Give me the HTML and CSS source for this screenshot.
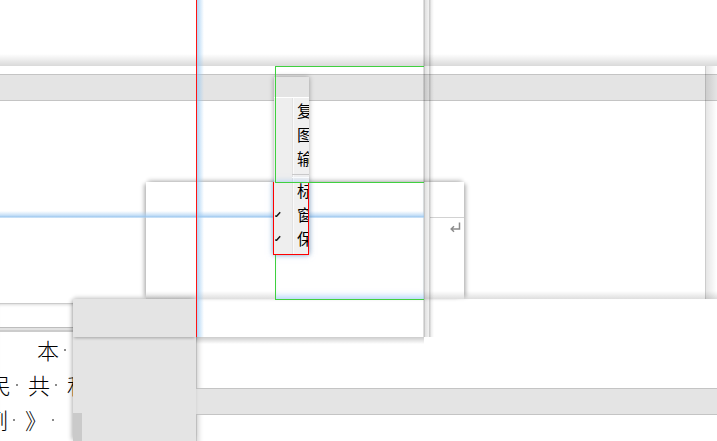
FILE: index.html
```html
<!DOCTYPE html>
<html lang="zh">
<head>
<meta charset="utf-8">
<title>窗口</title>
<link rel="stylesheet" href="styles.css">
</head>
<body>
<div class="desk">
  <section class="win win-bottom">
    <div class="band band-bottom"></div>
  </section>
  <section class="win win-right"></section>
  <section class="win win-top"></section>
  <section class="win win-mid">
    <div class="mid-pane">
      <svg class="ret" width="12" height="11" viewBox="0 0 12 11"><path d="M10.5 0.5V7H2.5M5 4.3L2.2 7L5 9.7" fill="none" stroke="#8c8c8c" stroke-width="1.5"/></svg>
    </div>
  </section>
  <div class="band band-top"></div>
  <div class="edge edge-66"></div>
  <div class="edge edge-299a"></div>
  <div class="edge edge-299b"></div>
  <div class="edge edge-337"></div>
  <div class="edge edge-705"></div>
  <div class="seam"></div>

  <section class="win win-doc">
    <div class="doc-gap"></div>
    <div class="doc-rule"></div>
    <div class="doc-lines">
      <p class="ln ln1"><span class="ch">本</span><i class="sp"></i><span class="ch">条</span><i class="sp"></i><span class="ch">例</span></p>
      <p class="ln ln2"><span class="ch">民</span><i class="sp"></i><span class="ch">共</span><i class="sp"></i><span class="ch">和</span><i class="sp"></i><span class="ch">国</span></p>
      <p class="ln ln3"><span class="ch">例</span><i class="sp"></i><span class="ch">》</span><i class="sp"></i></p>
    </div>
  </section>

  <section class="win win-gray">
    <div class="gray-head"></div>
    <div class="gray-strip"></div>
  </section>

  <div class="sel sel-g2"></div>
  <div class="hguide"></div>

  <div class="menu">
    <div class="menu-head"></div>
    <ul class="menu-list">
      <li class="mi"><span class="mi-gut"></span><span class="mi-txt">复制</span></li>
      <li class="mi"><span class="mi-gut"></span><span class="mi-txt">图片</span></li>
      <li class="mi"><span class="mi-gut"></span><span class="mi-txt">输出</span></li>
      <li class="mi-sep"></li>
      <li class="mi"><span class="mi-gut"></span><span class="mi-txt">标尺</span></li>
      <li class="mi"><span class="mi-gut"><svg class="chk" width="6" height="6" viewBox="0 0 6 6"><path d="M0.3 4.6L1.4 5.5L5.2 1.2" fill="none" stroke="#1a1a1a" stroke-width="1.5"/></svg></span><span class="mi-txt">窗格</span></li>
      <li class="mi"><span class="mi-gut"><svg class="chk" width="6" height="6" viewBox="0 0 6 6"><path d="M0.3 4.6L1.4 5.5L5.2 1.2" fill="none" stroke="#1a1a1a" stroke-width="1.5"/></svg></span><span class="mi-txt">保存</span></li>
    </ul>
  </div>
  <div class="sel sel-red"></div>
  <div class="sel sel-g1"></div>
  <div class="vguide"></div>
</div>
</body>
</html>
```

FILE: styles.css
```css
* { box-sizing: border-box; margin: 0; padding: 0; }
html, body { width: 717px; height: 441px; overflow: hidden; background: #fff; }
body { font-family: "Noto Sans CJK SC", "Noto Sans", sans-serif; color: #000; }

.desk { position: relative; width: 717px; height: 441px; overflow: hidden; background: #fff; }

.win { position: absolute; background: #fff; }

.win-bottom {
  left: 196px; top: 299px; width: 540px; height: 160px;
  border-left: 1px solid #c6c6c6;
  box-shadow: inset 6px 0 5px -4px rgba(0,0,0,.16);
}
.band {
  position: absolute; left: 0; right: 0; height: 27px;
  background: #e4e4e4;
  border-top: 1px solid #c4c4c4;
  border-bottom: 1px solid #c4c4c4;
}
.band-bottom { top: 89px; left: -1px; }
.band-top { top: 74px; width: 717px; }

.win-right { left: 430px; top: 66px; width: 275px; height: 233px; }
.win-top { left: -10px; top: -10px; width: 434px; height: 347px; }

.win-mid {
  left: 146px; top: 182px; width: 318px; height: 117px;
  box-shadow: -4px 0 4px -2px rgba(0,0,0,.28), 0 -4px 4px -2px rgba(0,0,0,.2), 4px 0 4px -2px rgba(0,0,0,.28);
}
.mid-pane {
  position: absolute; left: 284px; top: 35px; width: 34px; height: 82px;
  border-top: 1px solid #d2d2d2;
  display: flex; justify-content: flex-end; align-items: flex-start;
  padding: 4px 3px 0 0;
}
.ret { display: block; }

.edge { position: absolute; }
.edge-66 { left: 0; top: 54px; width: 717px; height: 12px; background: linear-gradient(rgba(0,0,0,0), rgba(0,0,0,.15)); }
.edge-299a { left: 146px; top: 291px; width: 129px; height: 8px; background: linear-gradient(rgba(0,0,0,0), rgba(0,0,0,.13)); }
.edge-299b { left: 424px; top: 291px; width: 293px; height: 8px; background: linear-gradient(rgba(0,0,0,0), rgba(0,0,0,.13)); }
.edge-337 { left: 196px; top: 337px; width: 228px; height: 7px; background: linear-gradient(rgba(0,0,0,.2), rgba(0,0,0,0)); }
.edge-705 { left: 705px; top: 66px; width: 12px; height: 233px; background: linear-gradient(to right, rgba(0,0,0,.2) 0, rgba(0,0,0,.2) 1px, rgba(0,0,0,.1) 1px, rgba(0,0,0,0) 12px); }
.seam {
  position: absolute; left: 423px; top: 0; width: 11px; height: 337px;
  background: linear-gradient(to right,
    rgba(0,0,0,.05) 0, rgba(0,0,0,.22) 1px, rgba(0,0,0,.22) 2px,
    rgba(0,0,0,.12) 2px, rgba(0,0,0,.05) 6px,
    rgba(0,0,0,.2) 6px, rgba(0,0,0,.2) 7px,
    rgba(0,0,0,.07) 8px, rgba(0,0,0,0) 11px);
}

.win-doc {
  left: 0; top: 303px; width: 196px; height: 138px;
  border-top: 1px solid #cbcbcb;
  box-shadow: inset 0 3px 3px -2px rgba(0,0,0,.15);
}
.doc-gap { height: 23px; }
.doc-rule { height: 5px; background: linear-gradient(#bdbdbd 0, #bdbdbd 1px, #e2e2e2 1px, #e2e2e2 3px, #cccccc 3px, #cccccc 5px); }
.doc-lines { font-size: 22px; line-height: 35px; font-weight: 300; white-space: nowrap; }
.ln { display: flex; align-items: center; height: 35px; }
.ln1 { padding-left: 37px; }
.ln2 { margin-left: -11px; }
.ln3 { margin-left: -14px; }
.ch { display: inline-block; width: 22px; text-align: center; }
.sp { display: inline-block; width: 2px; height: 2px; background: #8a8a8a; margin: 0 10px 0 5px; }

.win-gray {
  left: 73px; top: 299px; width: 123px; height: 142px;
  background: #e4e4e4;
  box-shadow: -3px 0 4px -1px rgba(0,0,0,.2), 0 -3px 4px -1px rgba(0,0,0,.15);
}
.gray-head { height: 38px; box-shadow: 0 2px 3px -1px rgba(0,0,0,.28); position: relative; }
.gray-strip { margin-top: 76px; width: 9px; height: 28px; background: #cacaca; }

.sel { position: absolute; }
.sel-g1 { left: 275px; top: 66px; width: 149px; height: 117px; border: 1px solid #3fd03f; border-right: none; }
.sel-g2 {
  left: 275px; top: 182px; width: 149px; height: 118px;
  border: 1px solid #3fd03f; border-right: none;
  box-shadow: inset 0 -7px 6px -4px rgba(120,180,240,.55);
}
.sel-red {
  left: 273px; top: 182px; width: 36px; height: 73px;
  border: 1px solid #ff0000; border-top: none;
  box-shadow: 0 0 6px rgba(110,170,235,.6);
}

.hguide {
  position: absolute; left: 0; top: 211px; width: 424px; height: 7px;
  background: linear-gradient(rgba(170,210,245,0) 0, rgba(165,205,242,.6) 60%, rgba(150,196,238,.9) 85%, rgba(200,225,248,.4) 100%);
}
.vguide {
  position: absolute; left: 196px; top: 0; width: 1px; height: 337px; background: #ff1414;
}
.vguide::after {
  content: ""; position: absolute; left: 1px; top: 0; width: 7px; height: 100%;
  background: linear-gradient(to right, rgba(150,200,242,.75), rgba(190,222,250,0));
}

.menu {
  position: absolute; left: 274px; top: 77px; width: 35px; height: 177px;
  background: #f0f0f0; overflow: hidden;
  box-shadow: 0 0 5px rgba(0,0,0,.35);
}
.menu-head { height: 20px; background: #e4e4e4; }
.menu-list {
  list-style: none; border-top: 1px solid #fff;
  background: linear-gradient(to right, #eeeeee 0, #eeeeee 18px, #e2e2e2 18px, #e2e2e2 19px, #fafafa 19px, #fafafa 20px, #f0f0f0 20px);
  height: 157px;
}
.mi { display: flex; align-items: center; height: 24px; font-size: 16px; line-height: 24px; white-space: nowrap; }
.mi-gut { width: 23px; flex: none; display: flex; align-items: center; height: 24px; padding-left: 1px; }
.chk { display: block; }
.mi-txt { flex: none; }
.mi-sep { height: 8px; position: relative; }
.mi-sep::after {
  content: ""; position: absolute; left: 18px; right: 0; top: 4px; height: 2px;
  border-top: 1px solid #cacaca; border-bottom: 1px solid #fff;
}
```
